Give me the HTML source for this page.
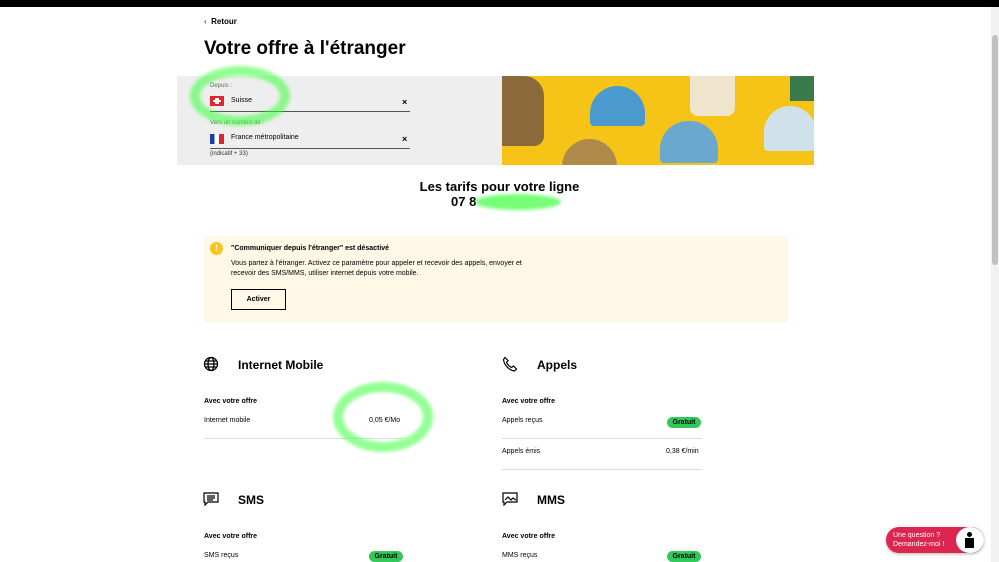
<!DOCTYPE html>
<html><head><meta charset="utf-8"><style>
*{margin:0;padding:0;box-sizing:border-box}
body{width:999px;height:562px;overflow:hidden;background:#fff;font-family:"Liberation Sans",sans-serif;color:#000;position:relative}
.a{position:absolute}
.t{font-size:7px}
.b{font-weight:bold}
.line{position:absolute;height:1px;background:#ddd}
.pill{position:absolute;background:#32c85a;color:#000;font-size:7px;font-weight:bold;border-radius:7px;width:34px;height:11px;text-align:center;line-height:11px}
.ring{position:absolute;border:10px solid rgba(60,255,60,.55);border-radius:50%;filter:blur(1.5px)}
</style></head><body>
<div class="a" style="left:0;top:0;width:999px;height:7px;background:#000"></div>
<div class="a" style="left:991px;top:7px;width:8px;height:555px;background:#f1f1f1"></div>
<div class="a" style="left:992px;top:35px;width:6px;height:230px;background:#c1c1c1;border-radius:3px"></div>

<div class="a t b" style="left:204px;top:17px;font-size:8px"><span style="color:#e0104a">‹</span>&nbsp; Retour</div>
<div class="a b" style="left:204px;top:38px;font-size:19px">Votre offre à l'étranger</div>

<div class="a" style="left:177px;top:76px;width:325px;height:89px;background:#eee"></div>
<div class="a t" style="left:210px;top:83px;color:#666;font-size:6px">Depuis :</div>
<div class="a" style="left:210px;top:96px;width:14px;height:10px;background:#e3232c"><div class="a" style="left:5px;top:2px;width:4px;height:6px;background:#fff"></div><div class="a" style="left:3px;top:4px;width:8px;height:2px;background:#fff"></div></div>
<div class="a t" style="left:231px;top:97px">Suisse</div>
<div class="a b" style="left:402px;top:97px;font-size:9px">×</div>
<div class="a" style="left:210px;top:111px;width:200px;height:1px;background:#555"></div>
<div class="a t" style="left:210px;top:120px;color:#666;font-size:6px">Vers un numéro de :</div>
<div class="a" style="left:210px;top:134px;width:14px;height:10px;background:linear-gradient(90deg,#1f3ea0 33%,#fff 33%,#fff 66%,#e3232c 66%)"></div>
<div class="a t" style="left:231px;top:134px">France métropolitaine</div>
<div class="a b" style="left:402px;top:134px;font-size:9px">×</div>
<div class="a" style="left:210px;top:148px;width:200px;height:1px;background:#555"></div>
<div class="a t" style="left:210px;top:151px;font-size:6px;color:#333">(indicatif + 33)</div>

<div class="a" style="left:502px;top:76px;width:312px;height:89px;background:#f6c416;overflow:hidden">
<div class="a" style="left:0;top:0;width:42px;height:70px;background:#8a6a3a;border-radius:0 20px 10px 0"></div>
<div class="a" style="left:88px;top:10px;width:55px;height:40px;background:#4a9ad0;border-radius:28px 28px 4px 4px"></div>
<div class="a" style="left:60px;top:63px;width:55px;height:30px;background:#b08a4a;border-radius:28px 28px 0 0"></div>
<div class="a" style="left:158px;top:45px;width:58px;height:42px;background:#6aa8d0;border-radius:28px 28px 4px 4px"></div>
<div class="a" style="left:188px;top:0;width:45px;height:40px;background:#efe4cc;border-radius:0 0 8px 8px"></div>
<div class="a" style="left:262px;top:30px;width:52px;height:45px;background:#cfe2ea;border-radius:26px 26px 4px 4px"></div>
<div class="a" style="left:288px;top:0;width:26px;height:25px;background:#3a7a4a"></div>
</div>

<div class="a b" style="left:0;width:999px;text-align:center;top:179px;font-size:13px">Les tarifs pour votre ligne</div>
<div class="a b" style="left:451px;top:194px;font-size:13px">07 8</div>

<div class="a" style="left:204px;top:236px;width:584px;height:86px;background:#fff8e6"></div>
<div class="a" style="left:210px;top:242px;width:13px;height:13px;border-radius:50%;background:#fcc419;color:#fff;font-size:9px;font-weight:bold;text-align:center;line-height:13px">!</div>
<div class="a t b" style="left:231px;top:245px">"Communiquer depuis l'étranger" est désactivé</div>
<div class="a t" style="left:231px;top:259px;line-height:10px;width:300px">Vous partez à l'étranger. Activez ce paramètre pour appeler et recevoir des appels, envoyer et recevoir des SMS/MMS, utiliser internet depuis votre mobile.</div>
<div class="a t b" style="left:231px;top:289px;width:55px;height:21px;border:1px solid #000;text-align:center;line-height:19px">Activer</div>

<svg class="a" style="left:203px;top:356px" width="16" height="16" viewBox="0 0 16 16" fill="none" stroke="#000" stroke-width="1.3"><circle cx="8" cy="8" r="6.5"/><ellipse cx="8" cy="8" rx="3" ry="6.5"/><path d="M1.5 8h13M2.5 5h11M2.5 11h11"/></svg>
<div class="a b" style="left:238px;top:358px;font-size:12px">Internet Mobile</div>
<div class="a t b" style="left:204px;top:398px">Avec votre offre</div>
<div class="a t" style="left:204px;top:417px">Internet mobile</div>
<div class="a t" style="left:369px;top:417px">0,05 €/Mo</div>
<div class="line" style="left:204px;top:438px;width:200px"></div>

<svg class="a" style="left:502px;top:356px" width="16" height="16" viewBox="0 0 16 16" fill="none" stroke="#000" stroke-width="1.2"><path d="M3 1.5l3 3-1.5 2c1 2 3 4 5 5l2-1.5 3 3-2 2C7 14 2 9 1.5 3.5z"/></svg>
<div class="a b" style="left:537px;top:358px;font-size:12px">Appels</div>
<div class="a t b" style="left:502px;top:398px">Avec votre offre</div>
<div class="a t" style="left:502px;top:417px">Appels reçus</div>
<div class="pill" style="left:667px;top:417px">Gratuit</div>
<div class="line" style="left:502px;top:438px;width:200px"></div>
<div class="a t" style="left:502px;top:448px">Appels émis</div>
<div class="a t" style="left:666px;top:448px">0,38 €/min</div>
<div class="line" style="left:502px;top:469px;width:200px"></div>

<svg class="a" style="left:203px;top:492px" width="16" height="14" viewBox="0 0 16 14" fill="none" stroke="#000" stroke-width="1.2"><path d="M1 1h14v9H5l-3 3v-3H1z"/><path d="M4 4h8M4 6h8M4 8h6"/></svg>
<div class="a b" style="left:238px;top:493px;font-size:12px">SMS</div>
<div class="a t b" style="left:204px;top:533px">Avec votre offre</div>
<div class="a t" style="left:204px;top:552px">SMS reçus</div>
<div class="pill" style="left:369px;top:551px">Gratuit</div>

<svg class="a" style="left:502px;top:492px" width="16" height="14" viewBox="0 0 16 14" fill="none" stroke="#000" stroke-width="1.2"><path d="M1 1h14v9H5l-3 3v-3H1z"/><path d="M3 8l3-3 3 3 2-2 3 2"/></svg>
<div class="a b" style="left:537px;top:493px;font-size:12px">MMS</div>
<div class="a t b" style="left:502px;top:533px">Avec votre offre</div>
<div class="a t" style="left:502px;top:552px">MMS reçus</div>
<div class="pill" style="left:667px;top:551px">Gratuit</div>

<div class="ring" style="left:190px;top:66px;width:100px;height:60px"></div>
<div class="a" style="left:475px;top:194px;width:86px;height:16px;border-radius:50%;background:rgba(60,255,60,.7);filter:blur(1.5px)"></div>
<div class="ring" style="left:333px;top:382px;width:100px;height:70px"></div>

<div class="a" style="left:886px;top:527px;width:98px;height:26px;background:#dc2650;border-radius:13px;box-shadow:0 1px 3px rgba(0,0,0,.3)"></div>
<div class="a" style="left:893px;top:531px;color:#fff;font-size:7px;line-height:9px">Une question ?<br>Demandez-moi !</div>
<div class="a" style="left:956px;top:527px;width:28px;height:26px;border-radius:50%;background:#fff"></div>
<div class="a" style="left:967px;top:532px;width:5px;height:5px;border-radius:50%;background:#000"></div>
<div class="a" style="left:965px;top:538px;width:9px;height:10px;background:#000"></div>
</body></html>
